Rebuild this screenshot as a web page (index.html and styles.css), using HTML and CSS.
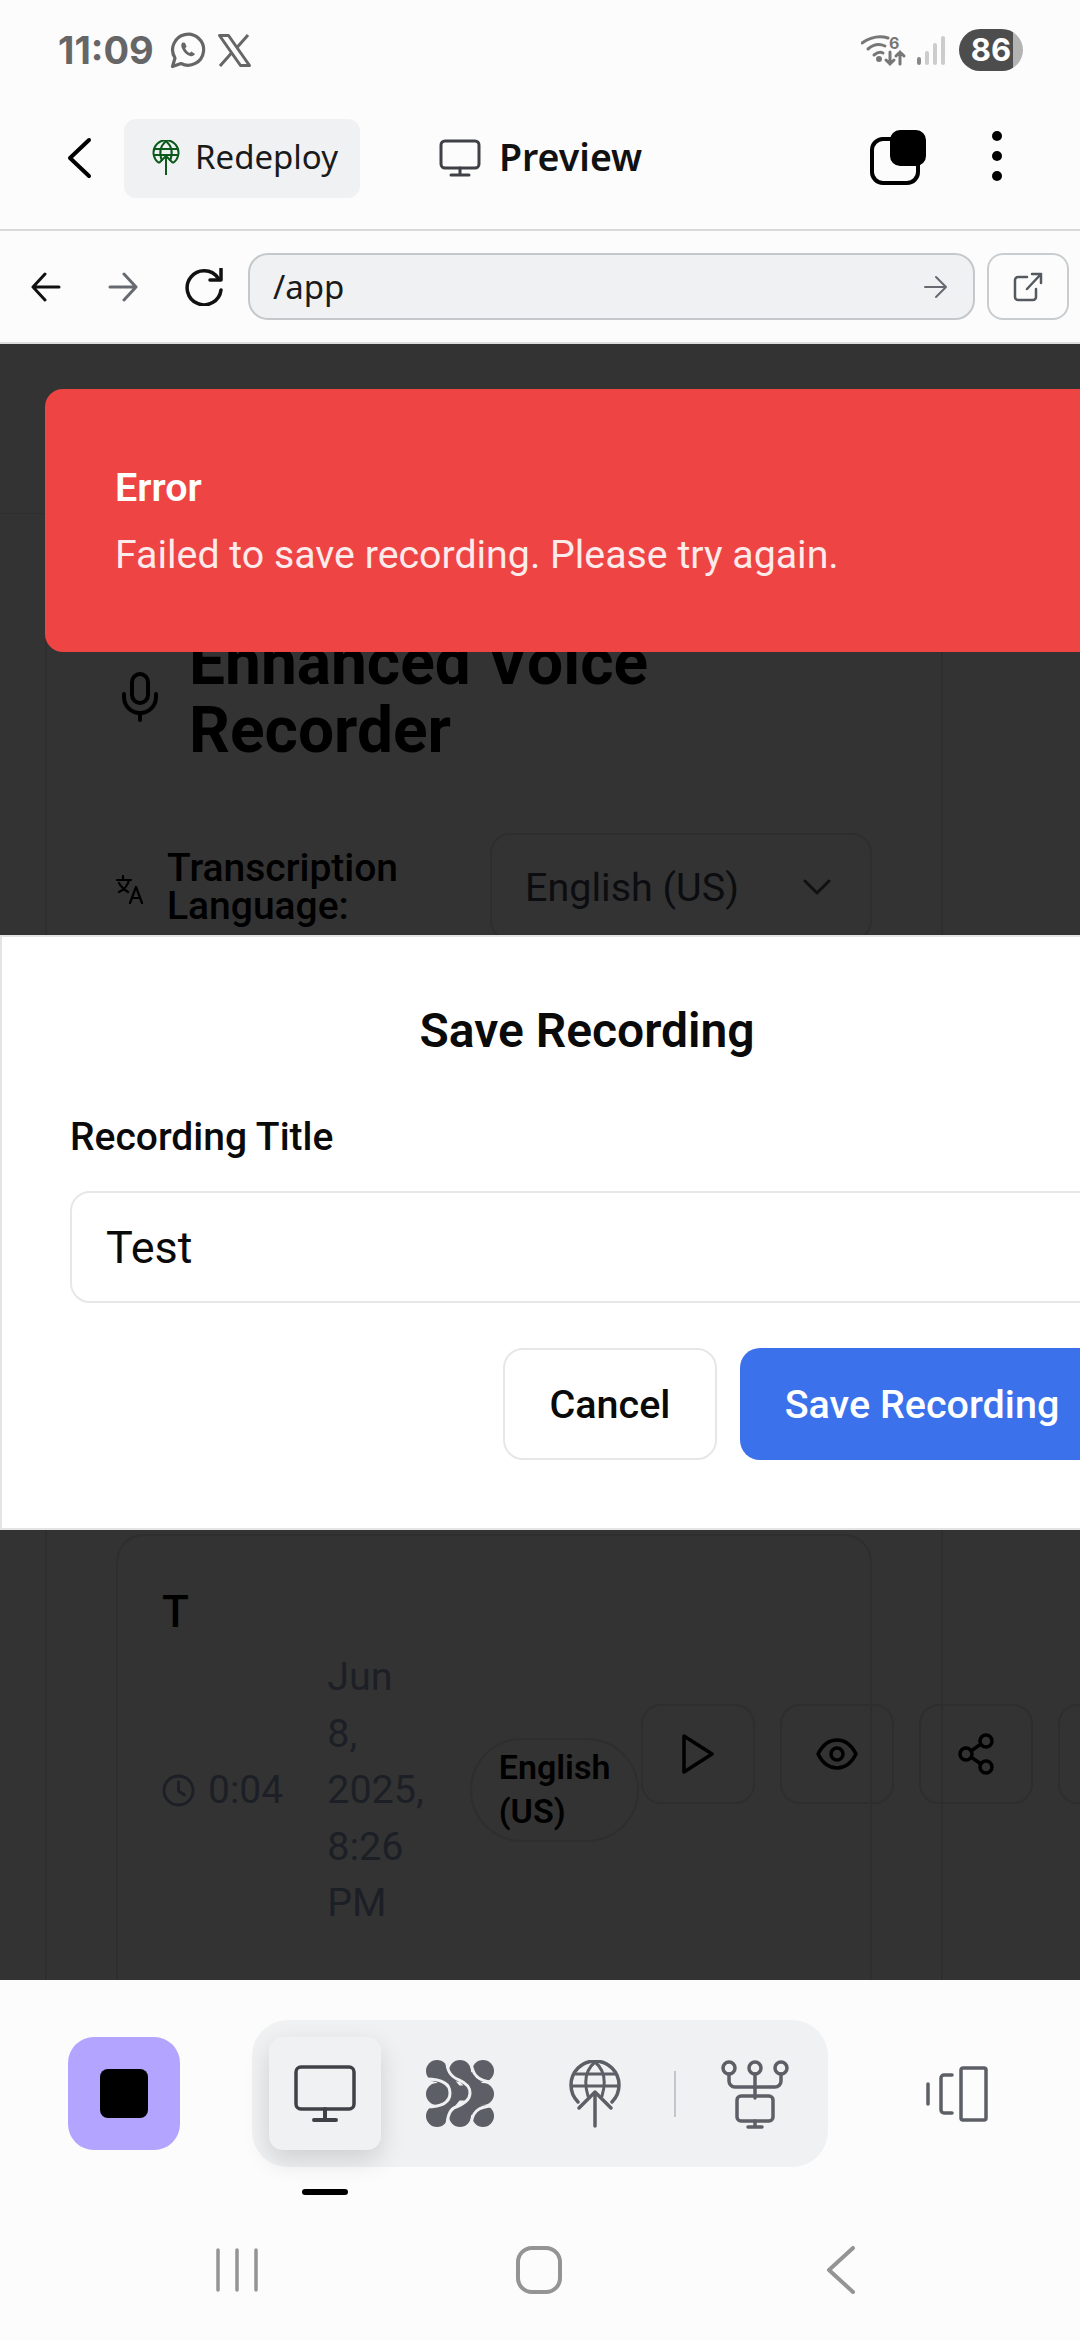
FILE: index.html
```html
<!DOCTYPE html>
<html lang="en">
<head>
    <meta charset="UTF-8">
    <meta name="viewport" content="width=device-width, initial-scale=1.0">
    <title>Enhanced Voice Recorder</title>
    <link rel="stylesheet" href="styles.css">
</head>
<body>
<div class="phone">

    <!-- Status bar -->
    <div class="status-bar">
        <div class="status-left">
            <span class="time">11:09</span>
            <svg width="36" height="37" viewBox="0 0 36 37" fill="none" stroke="#666" stroke-width="3.2"><path d="M2.500 34.500 5 26A15.500 15.500 0 1 1 11 31.500Z" stroke-linejoin="round"/><path d="M12.500 10.500c-1.500 1.500-1.700 3.500-.2 6.500 1.700 3.400 4.400 6 7.700 7 2.300.6 4-.3 5-2l-3.600-2.500-1.600 1.500c-2-.6-4-3-4.600-4.700l1.400-1.700-1.700-3.900z" fill="#666" stroke="none"/></svg>
            <svg width="35" height="33" viewBox="0 0 35 33" fill="none" stroke="#666" stroke-width="3"><path d="M2.500 1.500h9L32.500 31.500h-9z" stroke-linejoin="round"/><path d="M31 1 20 13.500M3 32l11.500-13"/></svg>
        </div>
        <div class="status-right">
            <svg width="46" height="34" viewBox="0 0 46 34" fill="none" stroke="#777" stroke-width="3" stroke-linecap="round">
                <path d="M1 10Q14 1 27 5"/><path d="M7 16Q15 9 24 13"/><path d="M13 22Q18 18 22 20"/>
                <circle cx="18" cy="26" r="1.500" fill="#777"/>
                <path d="M29 19v12M25 27l4 4 4-4M39 31V19M35 23l4-4 4 4"/>
                <text x="28" y="16" class="wifi-six">6</text>
            </svg>
            <div class="signal">
                <span class="bar bar-1"></span>
                <span class="bar bar-2"></span>
                <span class="bar bar-3"></span>
                <span class="bar bar-4"></span>
            </div>
            <div class="battery">86</div>
        </div>
    </div>

    <!-- Top bar -->
    <div class="top-bar">
        <svg class="top-back" width="26" height="42" viewBox="0 0 26 42" fill="none" stroke="#000" stroke-width="4" stroke-linecap="round" stroke-linejoin="round"><path d="M23 3 4 21l19 18"/></svg>
        <div class="chip">
            <svg width="28" height="36" viewBox="0 0 28 36" fill="none" stroke="#0b5a1b" stroke-width="2"><path d="M7 23A12.500 12.500 0 1 1 21 23"/><path d="M14 1c-8 7-6 15-4 20M14 1c8 7 6 15 4 20M2 9h24M1.500 15h25"/><path d="M14 35V16M7 23l7-7 7 7"/></svg>
            <span>Redeploy</span>
        </div>
        <div class="tab-title">
            <svg width="42" height="38" viewBox="0 0 42 38" fill="none" stroke="#3f4147" stroke-width="3" stroke-linecap="round"><rect x="2" y="2" width="38" height="27" rx="4"/><path d="M21 29v6M12 36h18"/></svg>
            <span>Preview</span>
        </div>
        <div class="top-actions">
            <div class="copy-icon"><span class="copy-fill"></span></div>
            <div class="dots"><span></span><span></span><span></span></div>
        </div>
    </div>

    <!-- Browser bar -->
    <div class="browser-bar">
        <svg class="arrow-back" width="30" height="30" viewBox="0 0 30 30" fill="none" stroke="#111" stroke-width="3" stroke-linecap="round" stroke-linejoin="round"><path d="M28 15H2M14 2 2 15l12 13"/></svg>
        <svg class="arrow-forward" width="30" height="30" viewBox="0 0 30 30" fill="none" stroke="#666a70" stroke-width="3" stroke-linecap="round" stroke-linejoin="round"><path d="M2 15h26M16 2l12 13-12 13"/></svg>
        <svg class="reload" width="42" height="38" viewBox="0 0 42 38" fill="none" stroke="#111" stroke-width="3.500" stroke-linecap="round" stroke-linejoin="round"><path d="M35 10A17 17 0 1 0 38 22"/><path d="M27 12h11V1"/></svg>
        <div class="url-field">
            <span>/app</span>
            <svg width="24" height="24" viewBox="0 0 24 24" fill="none" stroke="#666a70" stroke-width="2" stroke-linecap="round" stroke-linejoin="round"><path d="M1 12h21M12 2l10 10-10 10"/></svg>
        </div>
        <div class="open-btn">
            <svg width="30" height="30" viewBox="0 0 30 30" fill="none" stroke="#555a60" stroke-width="2.500" stroke-linecap="round" stroke-linejoin="round"><path d="M14 5H5a3 3 0 0 0-3 3v17a3 3 0 0 0 3 3h15a3 3 0 0 0 3-3v-8"/><path d="M14 17 28 2M19 2h9v9"/></svg>
        </div>
    </div>

    <!-- Web page under the dialog overlay -->
    <div class="viewport">
        <div class="app-bar"></div>
        <div class="card">
            <div class="card-head">
                <svg width="36" height="50" viewBox="0 0 36 50" fill="none" stroke="#000" stroke-width="4" stroke-linecap="round"><rect x="10" y="2" width="16" height="29" rx="8"/><path d="M2 22v3a16 16 0 0 0 32 0v-3M18 41v7"/></svg>
                <h1>Enhanced Voice Recorder</h1>
            </div>

            <div class="lang-row">
                <svg class="lang-icon" width="30" height="30" viewBox="0 0 30 30" fill="none" stroke="#000" stroke-width="2.200" stroke-linecap="round" stroke-linejoin="round"><path d="M1 6h14M7 2v4M3 9c2 4 6 7 9 9M13 6c-1 5-5 10-10 12"/><path d="M14 29l6-16 6 16M16 24h8"/></svg>
                <label>Transcription Language:</label>
                <div class="select">
                    <span>English (US)</span>
                    <svg width="28" height="16" viewBox="0 0 28 16" fill="none" stroke="#111" stroke-width="3" stroke-linecap="round" stroke-linejoin="round"><path d="M2 2l12 12L26 2"/></svg>
                </div>
            </div>

            <div class="rec-card">
                <div class="rec-title">T</div>
                <div class="rec-row">
                    <div class="rec-duration">
                        <svg width="33" height="33" viewBox="0 0 33 33" fill="none" stroke="#1c1f26" stroke-width="2.800" stroke-linecap="round" stroke-linejoin="round"><circle cx="16.500" cy="16.500" r="14.500"/><path d="M16.500 8v9l6 4"/></svg>
                        <span>0:04</span>
                    </div>
                    <div class="rec-date">Jun 8, 2025, 8:26 PM</div>
                    <div class="rec-lang">English (US)</div>
                    <div class="rec-actions">
                        <div class="icon-btn">
                            <svg width="32" height="40" viewBox="0 0 32 40" fill="none" stroke="#000" stroke-width="3.500" stroke-linejoin="round"><path d="M2 2l28 18L2 38z"/></svg>
                        </div>
                        <div class="icon-btn">
                            <svg width="42" height="32" viewBox="0 0 42 32" fill="none" stroke="#000" stroke-width="3.500"><path d="M2 16C7 6 13 2 21 2s14 4 19 14c-5 10-11 14-19 14S7 26 2 16z" stroke-linejoin="round"/><circle cx="21" cy="16" r="6"/></svg>
                        </div>
                        <div class="icon-btn">
                            <svg width="38" height="42" viewBox="0 0 38 42" fill="none" stroke="#000" stroke-width="3.500"><circle cx="29" cy="8" r="6"/><circle cx="9" cy="21" r="6"/><circle cx="29" cy="34" r="6"/><path d="M14 18l10-7M14 24l10 7"/></svg>
                        </div>
                        <div class="icon-btn"></div>
                    </div>
                </div>
            </div>
        </div>

        <!-- Toast -->
        <div class="toast">
            <div class="toast-title">Error</div>
            <div class="toast-text">Failed to save recording. Please try again.</div>
        </div>

        <!-- Dialog -->
        <div class="dialog">
            <h2>Save Recording</h2>
            <label class="field-label" for="recTitle">Recording Title</label>
            <input class="field-input" id="recTitle" type="text" value="Test">
            <div class="dialog-actions">
                <button class="btn-cancel" type="button">Cancel</button>
                <button class="btn-save" type="button">Save Recording</button>
            </div>
        </div>
    </div>

    <!-- Bottom dock -->
    <div class="dock">
        <div class="dock-row">
            <div class="stop-btn"><span class="stop-square"></span></div>
            <div class="dock-group">
                <div class="dock-item active">
                    <svg width="62" height="58" viewBox="0 0 62 58" fill="none" stroke="#3f4147" stroke-width="3.500" stroke-linecap="round"><rect x="2" y="2" width="58" height="42" rx="5"/><path d="M31 44v11M20 55h22" stroke-width="4"/></svg>
                </div>
                <div class="dock-item">
                    <svg width="68" height="67" viewBox="0 0 68 67" fill="none">
                        <g stroke="#5c5f66" stroke-width="15" stroke-linecap="round">
                            <path d="M11 11 30 33 11 56M34 11 56 34 34 56M30 33h16"/>
                        </g>
                        <g fill="#5c5f66">
                            <circle cx="57" cy="11" r="11"/><circle cx="11" cy="34" r="11"/><circle cx="57" cy="56" r="11"/>
                            <circle cx="11" cy="11" r="11"/><circle cx="34" cy="11" r="11"/><circle cx="11" cy="56" r="11"/><circle cx="34" cy="56" r="11"/><circle cx="57" cy="34" r="11"/>
                        </g>
                        <g stroke="#f0f1f3" stroke-width="3" fill="none">
                            <path d="M21 -1C20 12 26 17 33 20 42 24 44 28 44 33 44 40 38 44 30 47 24 49 21 56 21 68"/>
                            <path d="M0 19C12 19 24 22 24 33 24 44 12 47 0 47"/>
                            <path d="M45 -1C45 12 50 22 68 22"/>
                            <path d="M68 46C52 46 45 52 45 68"/>
                        </g>
                    </svg>
                </div>
                <div class="dock-item">
                    <svg width="52" height="68" viewBox="0 0 52 68" fill="none" stroke="#5c5f66" stroke-width="3.500" stroke-linecap="round" stroke-linejoin="round"><path d="M9 42A24 24 0 1 1 43 42"/><path d="M26 2c-12 10-10 24-7 34M26 2c12 10 10 24 7 34M3 26h46M6 14h40" stroke-width="3"/><path d="M26 66V32M10 48l16-16 16 16"/></svg>
                </div>
                <span class="dock-divider"></span>
                <div class="dock-item">
                    <svg width="68" height="70" viewBox="0 0 68 70" fill="none" stroke="#5c5f66" stroke-width="3.500" stroke-linecap="round" stroke-linejoin="round"><circle cx="8" cy="9" r="6"/><circle cx="34" cy="9" r="6"/><circle cx="60" cy="9" r="6"/><path d="M8 15v7a6 6 0 0 0 6 6h40a6 6 0 0 0 6-6v-7M34 15v24"/><rect x="16" y="37" width="36" height="25" rx="4"/><path d="M34 62v6M27 68h14"/></svg>
                </div>
            </div>
            <svg class="dock-device" width="62" height="56" viewBox="0 0 62 56" fill="none" stroke="#5c5f66" stroke-width="3.500" stroke-linecap="round" stroke-linejoin="round"><rect x="35" y="2" width="25" height="52" rx="2"/><path d="M26 9h-8a3 3 0 0 0-3 3v32a3 3 0 0 0 3 3h8M2 18v20"/></svg>
        </div>
        <span class="dock-indicator"></span>
        <div class="sys-nav">
            <svg width="42" height="44" viewBox="0 0 42 44" fill="none" stroke="#949494" stroke-width="3.500" stroke-linecap="round"><path d="M2 2v40M21 2v40M40 2v40"/></svg>
            <svg width="46" height="48" viewBox="0 0 46 48" fill="none" stroke="#949494" stroke-width="4"><rect x="2" y="2" width="42" height="44" rx="14"/></svg>
            <svg class="sys-back" width="30" height="48" viewBox="0 0 30 48" fill="none" stroke="#949494" stroke-width="4" stroke-linecap="round" stroke-linejoin="round"><path d="M27 2 3 24l24 22"/></svg>
        </div>
    </div>
</div>
</body>
</html>
```

FILE: styles.css
```css
/* App shell */
html, body {
    margin: 0;
    padding: 0;
    overflow: hidden;
}

body {
    font-family: Roboto, Arial, sans-serif;
    background-color: #fcfcfc;
}

.phone {
    display: flex;
    flex-direction: column;
    width: 1080px;
    height: 2340px;
    overflow: hidden;
}

/* Status bar */
.status-bar {
    display: flex;
    justify-content: space-between;
    align-items: center;
    height: 100px;
    padding: 0 57px 0 58px;
    flex-shrink: 0;
}

.status-left {
    display: flex;
    align-items: center;
    gap: 11px;
}

.time {
    font-family: Inter, sans-serif;
    font-size: 38px;
    font-weight: 700;
    color: #666;
    margin-right: 5px;
}

.status-right {
    display: flex;
    align-items: center;
    gap: 10px;
}

.wifi-six {
    font-family: Inter, sans-serif;
    font-size: 16px;
    font-weight: 700;
    fill: #777;
    stroke: none;
}

.signal {
    display: flex;
    align-items: flex-end;
    gap: 4px;
    height: 30px;
    margin-right: 4px;
}

.bar {
    width: 4px;
    background-color: #ccc;
    border-radius: 2px;
}

.bar-1 { height: 8px; background-color: #888; }
.bar-2 { height: 14px; }
.bar-3 { height: 22px; }
.bar-4 { height: 29px; }

.battery {
    width: 64px;
    height: 42px;
    line-height: 42px;
    border-radius: 21px;
    background: linear-gradient(to right, #4d4d4d 84%, #b3b3b3 84%);
    color: #fff;
    font-family: Inter, sans-serif;
    font-size: 31px;
    font-weight: 700;
    text-align: center;
}

/* Top bar */
.top-bar {
    display: flex;
    align-items: center;
    height: 131px;
    padding: 0 0 13px 66px;
    box-sizing: border-box;
    border-bottom: 2px solid #d9d9d9;
    flex-shrink: 0;
}

.top-back {
    margin-right: 32px;
}

.chip {
    display: flex;
    align-items: center;
    gap: 15px;
    width: 236px;
    height: 79px;
    box-sizing: border-box;
    padding-left: 28px;
    background-color: #f0f1f3;
    border-radius: 12px;
    font-family: "Noto Sans", sans-serif;
    font-size: 33px;
    color: #1a1a1a;
}

.chip span {
    margin-bottom: 3px;
}

.tab-title {
    display: flex;
    align-items: center;
    gap: 18px;
    margin-left: 79px;
    font-family: "Noto Sans", sans-serif;
    font-size: 37.500px;
    font-weight: 600;
    color: #111;
}

.tab-title span {
    margin-bottom: 3px;
}

.top-actions {
    display: flex;
    align-items: center;
    margin: 0 0 5px auto;
    padding-right: 78px;
    gap: 72px;
}

.copy-icon {
    position: relative;
    width: 50px;
    height: 48px;
    margin-top: 10px;
    box-sizing: border-box;
    border: 4px solid #000;
    border-radius: 13px;
}

.copy-fill {
    position: absolute;
    top: -11px;
    right: -10px;
    width: 36px;
    height: 36px;
    background-color: #000;
    border-radius: 10px;
}

.dots {
    display: flex;
    flex-direction: column;
    gap: 10px;
}

.dots span {
    width: 10px;
    height: 10px;
    background-color: #000;
    border-radius: 50%;
}

/* Browser bar */
.browser-bar {
    display: flex;
    align-items: center;
    height: 113px;
    box-sizing: border-box;
    padding-left: 31px;
    border-bottom: 2px solid #ddd;
    flex-shrink: 0;
}

.arrow-forward {
    margin-left: 47px;
}

.reload {
    margin-left: 45px;
}

.url-field {
    display: flex;
    justify-content: space-between;
    align-items: center;
    width: 727px;
    height: 67px;
    box-sizing: border-box;
    margin-left: 23px;
    padding: 0 25px 0 23px;
    background-color: #f0f1f3;
    border: 2px solid #c4c8ca;
    border-radius: 20px;
    font-family: "Noto Sans", sans-serif;
    font-size: 33px;
    color: #1a1a1a;
}

.open-btn {
    display: flex;
    justify-content: center;
    align-items: center;
    width: 82px;
    height: 67px;
    box-sizing: border-box;
    margin-left: 12px;
    border: 2px solid #c9cdd0;
    border-radius: 16px;
}

/* Page behind the overlay */
.viewport {
    position: relative;
    flex: 1;
    overflow: hidden;
    background-color: #333;
    color: #000;
}

.app-bar {
    height: 170px;
    box-sizing: border-box;
    border-bottom: 1px solid #2e2e2e;
}

.card {
    width: 898px;
    height: 1500px;
    box-sizing: border-box;
    margin-left: 45px;
    padding: 115px 0 0 69px;
    border-left: 2px solid #2e2e2e;
    border-right: 2px solid #2e2e2e;
}

.card-head {
    display: flex;
    align-items: center;
    gap: 31px;
    margin-left: 6px;
}

.card-head h1 {
    margin: 0;
    width: 520px;
    font-size: 64px;
    font-weight: 700;
    line-height: 68px;
}

.lang-row {
    display: flex;
    align-items: center;
    height: 108px;
    margin-top: 68px;
}

.lang-icon {
    margin: 4px 21px 0 0;
    flex-shrink: 0;
}

.lang-row label {
    width: 323px;
    flex-shrink: 0;
    font-size: 39px;
    font-weight: 500;
    line-height: 38px;
}

.select {
    display: flex;
    justify-content: space-between;
    align-items: center;
    width: 382px;
    height: 108px;
    box-sizing: border-box;
    padding: 0 39px 0 33px;
    border: 2px solid #2e2e2e;
    border-radius: 20px;
    font-size: 39.500px;
    color: #0c0d10;
}

.rec-card {
    width: 756px;
    height: 700px;
    box-sizing: border-box;
    margin-top: 593px;
    padding: 44px 0 0 44px;
    border: 2px solid #2e2e2e;
    border-radius: 28px;
}

.rec-title {
    font-size: 44px;
    font-weight: 500;
    line-height: 64px;
}

.rec-row {
    display: flex;
    align-items: center;
    margin-top: 5px;
}

.rec-duration {
    display: flex;
    align-items: center;
    gap: 13px;
    font-size: 39px;
    color: #1c1f26;
}

.rec-date {
    width: min-content;
    margin: 0 46px 0 44px;
    font-size: 39.500px;
    line-height: 56.500px;
    color: #1c1f26;
}

.rec-lang {
    width: min-content;
    box-sizing: border-box;
    padding: 5px 27px 7px;
    border: 2px solid #2e2e2e;
    border-radius: 52px;
    font-size: 34px;
    font-weight: 600;
    line-height: 44px;
}

.rec-actions {
    display: flex;
    gap: 25px;
    margin: 0 0 72px 2px;
}

.icon-btn {
    display: flex;
    justify-content: center;
    align-items: center;
    flex-shrink: 0;
    width: 114px;
    height: 100px;
    box-sizing: border-box;
    border: 2px solid #2e2e2e;
    border-radius: 20px;
}

/* Toast */
.toast {
    position: absolute;
    top: 45px;
    left: 45px;
    display: flex;
    flex-direction: column;
    justify-content: center;
    gap: 21px;
    width: 1100px;
    height: 263px;
    box-sizing: border-box;
    padding-left: 70px;
    background-color: #ef4444;
    border-radius: 18px;
}

.toast-title {
    font-size: 39.500px;
    font-weight: 600;
    color: #fff;
}

.toast-text {
    font-size: 39.300px;
    color: #fdeaea;
}

/* Dialog */
.dialog {
    position: absolute;
    top: 591px;
    left: 0;
    width: 1174px;
    height: 595px;
    box-sizing: border-box;
    padding: 64px 68px 0;
    background-color: #fff;
    border: 2px solid #e4e4e7;
}

.dialog h2 {
    margin: 0;
    font-size: 48px;
    font-weight: 600;
    line-height: 60px;
    text-align: center;
    color: #0a0a0a;
}

.field-label {
    display: block;
    margin-top: 52px;
    font-size: 39px;
    font-weight: 500;
    line-height: 48px;
    color: #0a0a0a;
}

.field-input {
    display: block;
    width: 100%;
    height: 112px;
    box-sizing: border-box;
    margin-top: 30px;
    padding: 0 34px;
    background-color: #fff;
    border: 2px solid #e6e7e9;
    border-radius: 20px;
    font-family: Roboto, Arial, sans-serif;
    font-size: 45px;
    color: #0a0a0a;
}

.dialog-actions {
    display: flex;
    justify-content: flex-end;
    gap: 23px;
    margin-top: 45px;
}

.btn-cancel, .btn-save {
    height: 112px;
    box-sizing: border-box;
    border-radius: 20px;
    font-family: Roboto, Arial, sans-serif;
    font-size: 39.500px;
    font-weight: 500;
}

.btn-cancel {
    width: 214px;
    background-color: #fff;
    border: 2px solid #e6e7e9;
    color: #0a0a0a;
}

.btn-save {
    width: 364px;
    background-color: #3b72ec;
    border: none;
    color: #fff;
}

/* Bottom dock */
.dock {
    position: relative;
    height: 360px;
    flex-shrink: 0;
    background-color: #fcfcfc;
}

.dock-row {
    display: flex;
    align-items: center;
    height: 147px;
    padding: 40px 0 0 68px;
}

.stop-btn {
    display: flex;
    justify-content: center;
    align-items: center;
    width: 112px;
    height: 113px;
    background-color: #b2a4ff;
    border-radius: 26px;
}

.stop-square {
    width: 48px;
    height: 49px;
    background-color: #000;
    border-radius: 8px;
}

.dock-group {
    display: flex;
    align-items: center;
    gap: 23px;
    height: 147px;
    box-sizing: border-box;
    margin-left: 72px;
    padding: 0 17px;
    background-color: #f0f1f3;
    border-radius: 36px;
}

.dock-item {
    display: flex;
    justify-content: center;
    align-items: center;
    width: 112px;
    height: 113px;
    border-radius: 14px;
}

.dock-item.active {
    background-color: #f0f1f3;
    box-shadow: 0 10px 26px rgba(0, 0, 0, 0.14);
}

.dock-divider {
    width: 2px;
    height: 46px;
    background-color: #c4c6ca;
    flex-shrink: 0;
}

.dock-device {
    margin-left: 98px;
}

.dock-indicator {
    position: absolute;
    top: 209px;
    left: 302px;
    width: 46px;
    height: 6px;
    background-color: #000;
    border-radius: 3px;
}

.sys-nav {
    position: absolute;
    top: 266px;
    left: 216px;
    display: flex;
    align-items: center;
    gap: 258px;
}

.sys-back {
    margin-left: 6px;
}
```
